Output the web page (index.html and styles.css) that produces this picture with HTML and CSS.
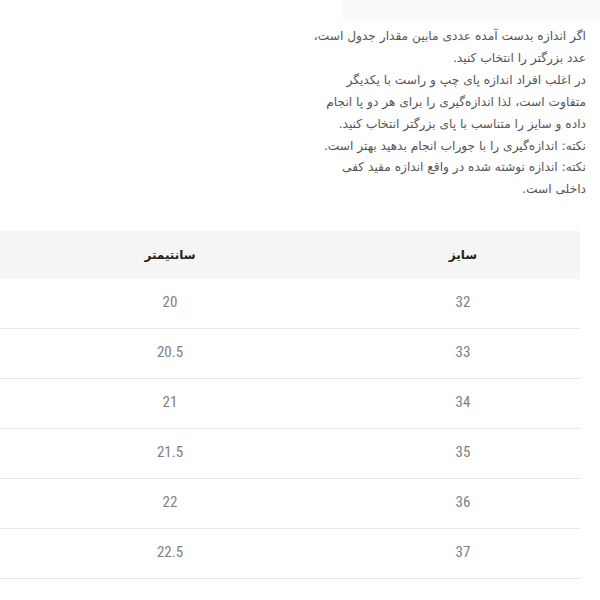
FILE: index.html
```html
<!DOCTYPE html>
<html lang="fa" dir="rtl">
<head>
<meta charset="utf-8">
<link rel="stylesheet" href="styles.css">
</head>
<body>
<div class="page">
  <div class="topbar"></div>
  <p class="note">
    اگر اندازه بدست آمده عددی مابین مقدار جدول است،<br>
    عدد بزرگتر را انتخاب کنید.<br>
    در اغلب افراد اندازه پای چپ و راست با یکدیگر<br>
    متفاوت است، لذا اندازه‌گیری را برای هر دو پا انجام<br>
    داده و سایز را متناسب با پای بزرگتر انتخاب کنید.<br>
    نکته: اندازه‌گیری را با جوراب انجام بدهید بهتر است.<br>
    نکته: اندازه نوشته شده در واقع اندازه مفید کفی<br>
    داخلی است.
  </p>
  <table class="sizes">
    <colgroup><col class="col-size"><col class="col-cm"></colgroup>
    <thead>
      <tr><th>سایز</th><th>سانتیمتر</th></tr>
    </thead>
    <tbody>
      <tr><td>32</td><td>20</td></tr>
      <tr><td>33</td><td>20.5</td></tr>
      <tr><td>34</td><td>21</td></tr>
      <tr><td>35</td><td>21.5</td></tr>
      <tr><td>36</td><td>22</td></tr>
      <tr><td>37</td><td>22.5</td></tr>
    </tbody>
  </table>
</div>
</body>
</html>
```

FILE: styles.css
```css
html, body {
  margin: 0;
  padding: 0;
  background: #fff;
}
.page {
  width: 600px;
  direction: rtl;
}
.topbar {
  width: 257px;
  height: 20px;
  background: #f9f9f9;
}
.note {
  margin: 6px 14px 0 0;
  padding: 0;
  font-family: "DejaVu Sans", "Noto Sans", sans-serif;
  font-size: 12.2px;
  line-height: 21.9px;
  color: #555;
  text-align: right;
}
.sizes {
  margin: 30px 20px 0 -6px;
  width: 586px;
  border-collapse: collapse;
  table-layout: fixed;
}
.col-size { width: 234px; }
.col-cm { width: 352px; }
.sizes th {
  background: #f5f5f5;
  height: 48px;
  padding: 0;
  font-family: "DejaVu Sans", sans-serif;
  font-size: 12px;
  font-weight: bold;
  color: #222;
  text-align: center;
}
.sizes td {
  height: 45px;
  padding: 0 0 4px 0;
  border-bottom: 1px solid #e6e6e6;
  font-family: "Liberation Sans Narrow", "Roboto", sans-serif;
  font-stretch: condensed;
  font-size: 15px;
  color: #808080;
  text-align: center;
  direction: ltr;
}
```
